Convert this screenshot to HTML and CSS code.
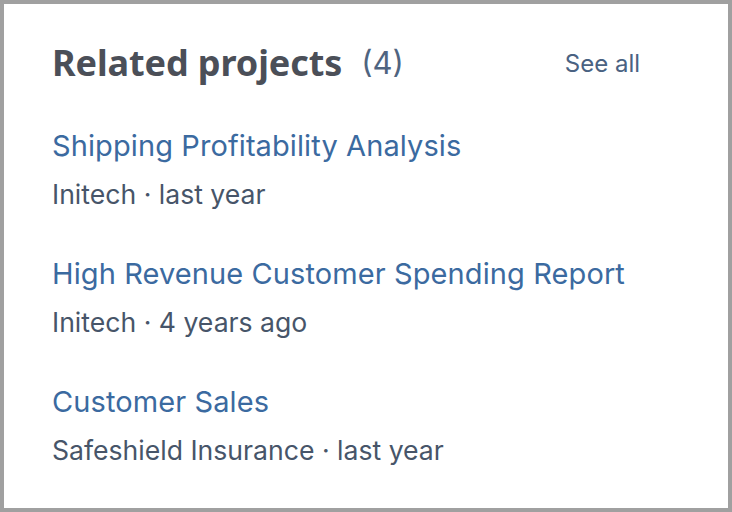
FILE: index.html
```
<!DOCTYPE html>
<html>
<head>
<meta charset="utf-8">
<link rel="stylesheet" href="styles.css">
</head>
<body>
<div class="card">
  <div class="header">
    <h2 class="title">Related projects<span class="count">(4)</span></h2>
    <a class="see-all" href="#">See all</a>
  </div>
  <ul class="list">
    <li class="item">
      <a class="item-title" href="#">Shipping Profitability Analysis</a>
      <div class="meta">Initech · last year</div>
    </li>
    <li class="item">
      <a class="item-title" href="#">High Revenue Customer Spending Report</a>
      <div class="meta">Initech · 4 years ago</div>
    </li>
    <li class="item">
      <a class="item-title" href="#">Customer Sales</a>
      <div class="meta">Safeshield Insurance · last year</div>
    </li>
  </ul>
</div>
</body>
</html>
```
FILE: styles.css
```
html, body {
  margin: 0;
  padding: 0;
  background: #ffffff;
}
.card {
  box-sizing: border-box;
  width: 732px;
  height: 512px;
  border: 4px solid #a0a0a0;
  background: #ffffff;
  padding: 35px 88px 0 48px;
  font-family: Inter, "Noto Sans", sans-serif;
}
.header {
  display: flex;
  align-items: center;
  justify-content: space-between;
  height: 48px;
}
.title {
  margin: 0;
  display: flex;
  align-items: center;
  font-family: "Noto Sans", sans-serif;
  font-weight: 700;
  font-size: 36px;
  line-height: 48px;
  color: #4b4f58;
  letter-spacing: -0.1px;
}
.count {
  font-family: Inter, sans-serif;
  font-weight: 400;
  font-size: 31px;
  color: #4f6480;
  margin-left: 19px;
  letter-spacing: 0;
}
.see-all {
  font-size: 24px;
  color: #4a6282;
  text-decoration: none;
}
.list {
  list-style: none;
  margin: 41px 0 0 0;
  padding: 0;
  display: flex;
  flex-direction: column;
  gap: 44px;
}
.item {
  display: flex;
  flex-direction: column;
  gap: 12px;
}
.item-title {
  font-size: 29px;
  line-height: 36px;
  color: #3b6aa0;
  text-decoration: none;
  letter-spacing: 0.1px;
}
.meta {
  font-size: 26.6px;
  line-height: 36px;
  color: #475569;
}
```
